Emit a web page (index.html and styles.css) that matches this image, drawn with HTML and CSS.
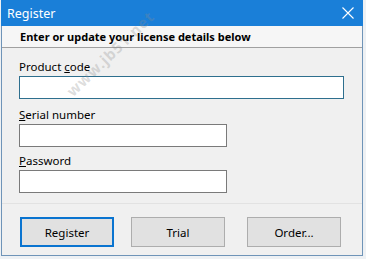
FILE: index.html
```html
<!DOCTYPE html>
<html>
<head>
<meta charset="utf-8">
<link rel="stylesheet" href="styles.css">
</head>
<body>
<div class="window">
  <div class="titlebar">
    <span class="title">Register</span>
    <svg class="close" width="12" height="12" viewBox="0 0 12 12"><path d="M0.5 0.5 L11.5 11.5 M11.5 0.5 L0.5 11.5" stroke="#fff" stroke-width="1.1"/></svg>
  </div>
  <div class="header">Enter or update your license details below</div>
  <div class="form">
    <label class="lbl">Product <u>c</u>ode</label>
    <div class="input wide focus first"></div>
    <label class="lbl"><u>S</u>erial number</label>
    <div class="input second"></div>
    <label class="lbl"><u>P</u>assword</label>
    <div class="input"></div>
  </div>
  <div class="buttons">
    <div class="btn default">Register</div>
    <div class="btn trial">Trial</div>
    <div class="btn order">Order...</div>
  </div>
  <div class="watermark">www.jb51.net</div>
</div>
</body>
</html>
```
FILE: styles.css
```css
* { box-sizing: border-box; }
html, body { margin: 0; padding: 0; }
body {
  width: 366px; height: 259px; overflow: hidden;
  background: #eef1f4;
  font-family: "Noto Sans", sans-serif;
  font-size: 11.5px;
  color: #000;
}
.window {
  position: relative;
  margin-left: 1px;
  width: 362px; height: 256px;
  border: 1px solid #6f94b8;
  border-top: none;
  background: #f0f0f0;
  display: flex; flex-direction: column;
}
.titlebar {
  flex: none;
  height: 26px;
  background: #1a7fd8;
  display: flex; align-items: center; justify-content: space-between;
  padding: 0 7px 0 6px;
  margin: 0 -1px;
}
.title { color: #fff; font-size: 12.5px; }
.close { margin-right: 2px; }
.header {
  flex: none;
  height: 22px;
  background: #f6f6f6;
  border-bottom: 1px solid #a0a0a0;
  font-weight: bold;
  font-size: 11px;
  padding-left: 18px;
  line-height: 21px;
}
.form {
  flex: 1;
  padding: 11px 0 0 17px;
  display: flex; flex-direction: column; align-items: flex-start;
}
.lbl { line-height: 15px; height: 17px; }
.input {
  flex: none;
  width: 208px; height: 23px;
  background: #fff;
  border: 1px solid #7a7a7a;
}
.input.first { margin-bottom: 8px; }
.input.second { margin-bottom: 6px; }
.input.wide { width: 325px; }
.input.focus { border-color: #2e6f8e; }
.buttons {
  flex: none;
  height: 52px;
  border-top: 1px solid #e2e2e2;
  display: flex; align-items: flex-start;
  padding: 13px 0 0 18px;
}
.btn {
  width: 94px; height: 30px;
  background: #e1e1e1;
  border: 1px solid #adadad;
  display: flex; align-items: center; justify-content: center;
}
.btn.default { border: 2px solid #0a74d0; }
.btn.trial { margin-left: 17px; }
.btn.order { margin-left: 22px; }
.watermark {
  position: absolute;
  left: 60px; top: 86px;
  transform: rotate(-44deg);
  transform-origin: left top;
  color: rgba(140,140,140,0.3);
  font-size: 15px;
  font-weight: bold;
  letter-spacing: 1px;
  pointer-events: none;
}
```
